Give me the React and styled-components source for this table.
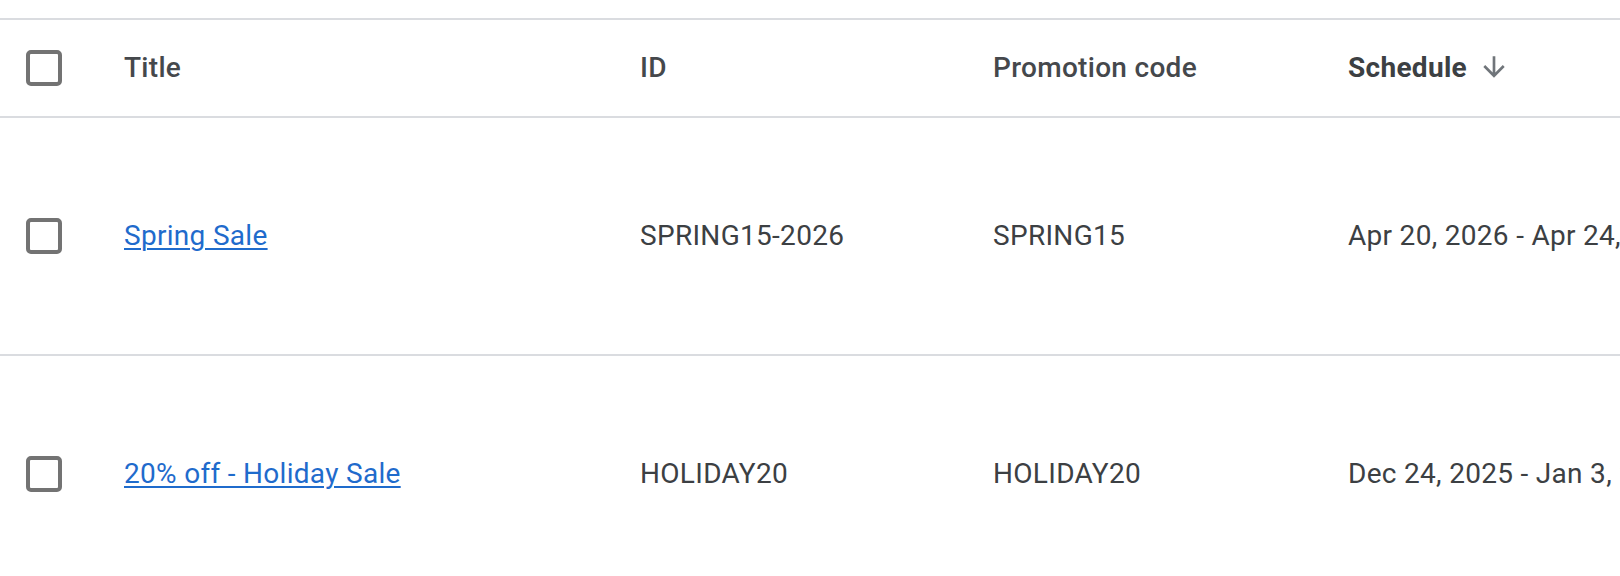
import React from "react";
import styled, { createGlobalStyle } from "styled-components";

const GlobalStyle = createGlobalStyle`
  html, body {
    margin: 0;
    padding: 0;
    background: #ffffff;
    overflow: hidden;
  }
  body {
    font-family: Roboto, "Liberation Sans", Arial, sans-serif;
    -webkit-font-smoothing: antialiased;
  }
`;

const Page = styled.div`
  padding-top: 18px;
  width: 2100px;
`;

const Table = styled.div`
  display: flex;
  flex-direction: column;
  border-top: 2px solid #dadce0;
`;

const Row = styled.div`
  display: grid;
  grid-template-columns: 124px 516px 353px 355px 1fr;
  align-items: center;
  height: ${(p) => (p.$header ? "96px" : "236px")};
  border-bottom: 2px solid #dadce0;
`;

const CheckCell = styled.div`
  display: flex;
  align-items: center;
  padding-left: 26px;
`;

const Checkbox = styled.span`
  display: block;
  box-sizing: border-box;
  width: 36px;
  height: 36px;
  border: 4px solid #737373;
  border-radius: 5px;
  background: #fff;
`;

const HeadCell = styled.div`
  display: flex;
  align-items: center;
  margin-top: -2px;
  font-size: 28px;
  font-weight: ${(p) => (p.$sorted ? 700 : 500)};
  letter-spacing: 0.3px;
  color: ${(p) => (p.$sorted ? "#3c4043" : "#45484c")};
  white-space: nowrap;
`;

const SortIcon = styled.svg`
  width: 32px;
  height: 32px;
  margin-left: 11px;
  fill: #70757a;
  flex: none;
`;

const Cell = styled.div`
  margin-top: -2px;
  font-size: 28px;
  font-weight: 400;
  letter-spacing: 0.3px;
  color: #3c4043;
  white-space: nowrap;
`;

const Link = styled.a`
  font-size: 28px;
  letter-spacing: 0.3px;
  color: #1f6bcc;
  text-decoration: underline;
  text-decoration-thickness: 2px;
  text-underline-offset: 3px;
  white-space: nowrap;
  cursor: pointer;
`;

const rows = [
  {
    title: "Spring Sale",
    id: "SPRING15-2026",
    code: "SPRING15",
    schedule: "Apr 20, 2026 - Apr 24, 2026",
  },
  {
    title: "20% off - Holiday Sale",
    id: "HOLIDAY20",
    code: "HOLIDAY20",
    schedule: "Dec 24, 2025 - Jan 3, 2026",
  },
];

export default function App() {
  return (
    <>
      <GlobalStyle />
      <Page>
        <Table>
          <Row $header>
            <CheckCell>
              <Checkbox />
            </CheckCell>
            <HeadCell>Title</HeadCell>
            <HeadCell>ID</HeadCell>
            <HeadCell>Promotion code</HeadCell>
            <HeadCell $sorted>
              Schedule
              <SortIcon viewBox="0 0 24 24" aria-hidden="true">
                <path d="M20 12l-1.41-1.41L13 16.17V4h-2v12.17l-5.58-5.59L4 12l8 8 8-8z" />
              </SortIcon>
            </HeadCell>
          </Row>
          {rows.map((r) => (
            <Row key={r.id}>
              <CheckCell>
                <Checkbox />
              </CheckCell>
              <Cell>
                <Link>{r.title}</Link>
              </Cell>
              <Cell>{r.id}</Cell>
              <Cell>{r.code}</Cell>
              <Cell>{r.schedule}</Cell>
            </Row>
          ))}
        </Table>
      </Page>
    </>
  );
}
